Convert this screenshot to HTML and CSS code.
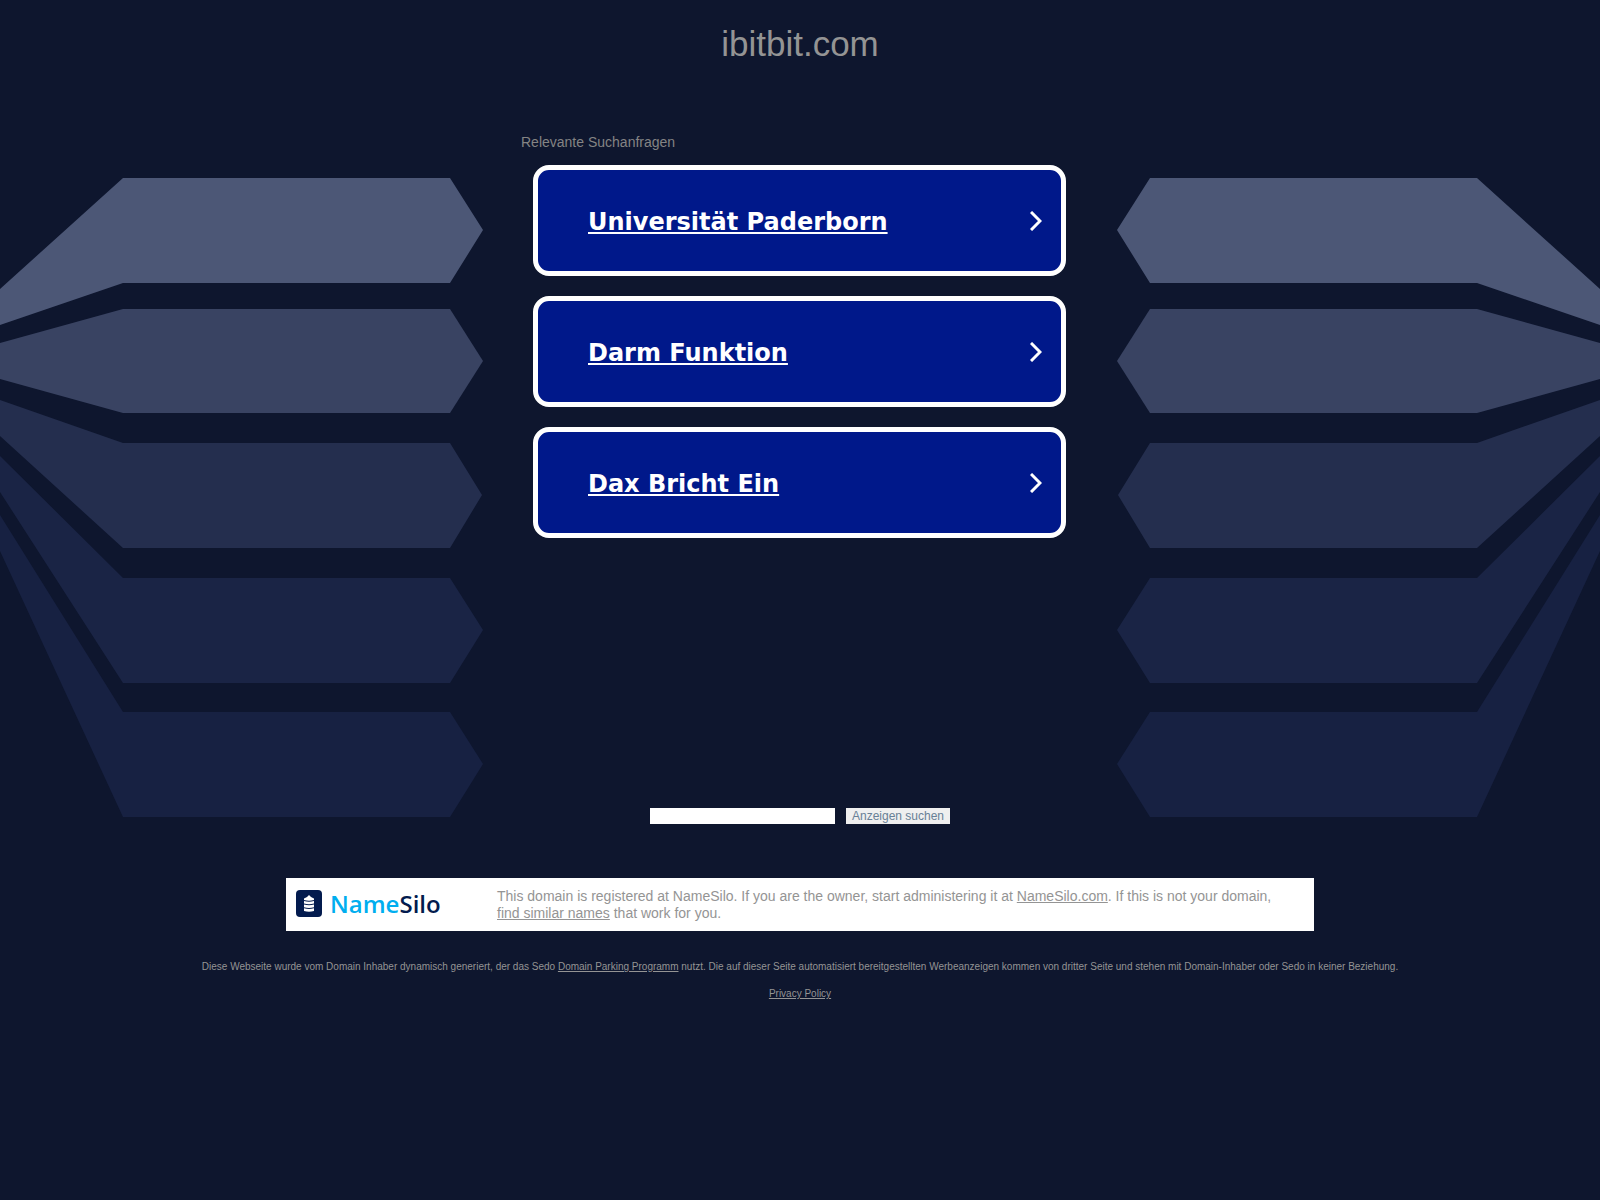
FILE: index.html
```html
<!DOCTYPE html>
<html lang="de">
<head>
    <meta charset="UTF-8">
    <meta name="viewport" content="width=device-width, initial-scale=1.0">
    <title>ibitbit.com</title>
    <link rel="stylesheet" href="styles.css">
</head>
<body>
    <header class="header">
        <h1>ibitbit.com</h1>
    </header>
    <main class="main">
        <svg class="arrows" viewBox="0 0 483 639" aria-hidden="true">
            <polygon fill="#4c5776" points="0,111 123,0 450,0 483,52 450,105 123,105 0,147"/>
            <polygon fill="#394362" points="0,165 123,131 450,131 483,183 450,235 123,235 0,201"/>
            <polygon fill="#242e4e" points="0,222 123,265 450,265 482,317 450,370 123,370 0,258"/>
            <polygon fill="#1a2445" points="0,278 123,400 450,400 483,452 450,505 123,505 0,314"/>
            <polygon fill="#172142" points="0,337 123,534 450,534 483,586 450,639 123,639 0,373"/>
        </svg>
        <div class="content">
            <section class="ads">
                <h2>Relevante Suchanfragen</h2>
                <ul class="ads-list">
                    <li>
                        <a href="#">
                            <span>Universität Paderborn</span>
                            <svg class="chevron" viewBox="0 0 12 20"><path d="M1 1l9 9-9 9"/></svg>
                        </a>
                    </li>
                    <li>
                        <a href="#">
                            <span>Darm Funktion</span>
                            <svg class="chevron" viewBox="0 0 12 20"><path d="M1 1l9 9-9 9"/></svg>
                        </a>
                    </li>
                    <li>
                        <a href="#">
                            <span>Dax Bricht Ein</span>
                            <svg class="chevron" viewBox="0 0 12 20"><path d="M1 1l9 9-9 9"/></svg>
                        </a>
                    </li>
                </ul>
            </section>
            <form class="search">
                <input type="text" name="q" aria-label="Anzeigen suchen">
                <button type="submit">Anzeigen suchen</button>
            </form>
        </div>
        <svg class="arrows arrows-right" viewBox="0 0 483 639" aria-hidden="true">
            <polygon fill="#4c5776" points="0,111 123,0 450,0 483,52 450,105 123,105 0,147"/>
            <polygon fill="#394362" points="0,165 123,131 450,131 483,183 450,235 123,235 0,201"/>
            <polygon fill="#242e4e" points="0,222 123,265 450,265 482,317 450,370 123,370 0,258"/>
            <polygon fill="#1a2445" points="0,278 123,400 450,400 483,452 450,505 123,505 0,314"/>
            <polygon fill="#172142" points="0,337 123,534 450,534 483,586 450,639 123,639 0,373"/>
        </svg>
    </main>
    <div class="banner">
        <a class="logo" href="#">
            <svg viewBox="0 0 26 27" aria-hidden="true">
                <rect width="26" height="27" rx="4" fill="#031b4e"/>
                <path fill="#fff" d="M8 10V8.500l3-1.500 2-2 2 2 3 1.500V10q-5 1.500-10 0zM8 11q5 1.500 10 0v2.600q-5 1.500-10 0zM8 14.600q5 1.500 10 0v2.600q-5 1.500-10 0zM8 18.200q5 1.500 10 0V21q-5 1.500-10 0z"/>
            </svg>
            <span class="logo-text"><span>Name</span>Silo</span>
        </a>
        <p>This domain is registered at NameSilo. If you are the owner, start administering it at <a href="#">NameSilo.com</a>. If this is not your domain, <a href="#">find similar names</a> that work for you.</p>
    </div>
    <footer class="footer">
        <p>Diese Webseite wurde vom Domain Inhaber dynamisch generiert, der das Sedo <a href="#">Domain Parking Programm</a> nutzt. Die auf dieser Seite automatisiert bereitgestellten Werbeanzeigen kommen von dritter Seite und stehen mit Domain-Inhaber oder Sedo in keiner Beziehung.</p>
        <p><a href="#">Privacy Policy</a></p>
    </footer>
</body>
</html>
```
FILE: styles.css
```css
* {
    box-sizing: border-box;
    margin: 0;
    padding: 0;
}

body {
    background: #0e162e;
    color: #949494;
    font-family: Arial, "Liberation Sans", sans-serif;
    font-size: 14px;
}

.header {
    padding: 24px 20px;
    text-align: center;
}
.header h1 {
    font-size: 35px;
    font-weight: normal;
    line-height: 40px;
}

.main {
    display: flex;
    align-items: stretch;
    padding-top: 46px;
}
.arrows {
    flex: none;
    width: 483px;
    height: 639px;
    margin-top: 44px;
}
.arrows-right {
    transform: scaleX(-1);
}
.content {
    flex: 1;
    display: flex;
    flex-direction: column;
    justify-content: space-between;
    min-height: 690px;
    padding: 0 38px;
}

.ads h2 {
    color: #848484;
    font-size: 14px;
    font-weight: normal;
    line-height: 16px;
}
.ads-list {
    display: flex;
    flex-direction: column;
    gap: 20px;
    padding: 15px 13px 15px 12px;
    list-style: none;
}
.ads-list a {
    display: flex;
    align-items: center;
    justify-content: space-between;
    height: 111px;
    padding: 0 19px 0 50px;
    border: 5px solid #fff;
    border-radius: 16px;
    background: #00188a;
    color: #fff;
    font-family: Verdana, "DejaVu Sans", sans-serif;
    font-size: 24px;
    font-weight: bold;
    line-height: 28px;
}
.ads-list span {
    padding-top: 2px;
}
.chevron {
    width: 12px;
    height: 20px;
    fill: none;
    stroke: #fff;
    stroke-width: 3;
}

.search {
    display: flex;
    justify-content: center;
    gap: 11px;
}
.search input,
.search button {
    height: 16px;
    border: none;
    font-family: inherit;
    font-size: 12px;
    line-height: 16px;
}
.search input {
    width: 185px;
    background: #fff;
}
.search button {
    padding: 0 6px;
    background: #efefef;
    color: #688096;
}

.banner {
    display: flex;
    align-items: flex-start;
    max-width: 1028px;
    margin: 54px auto 0;
    padding: 10px 20px 9px 10px;
    background: #fff;
}
.banner p {
    flex: 1;
    line-height: 17px;
}
.banner p a,
.footer a {
    color: inherit;
}

.logo {
    display: flex;
    align-items: center;
    gap: 8px;
    width: 201px;
    padding-top: 2px;
    color: #031b4e;
    text-decoration: none;
}
.logo svg {
    width: 26px;
    height: 27px;
}
.logo-text {
    font-family: "Open Sans", sans-serif;
    font-size: 24px;
    font-weight: 600;
    line-height: 26px;
}
.logo-text span {
    color: #00aeef;
}

.footer {
    display: flex;
    flex-direction: column;
    gap: 15px;
    padding: 30px 20px;
    font-size: 10px;
    line-height: 12px;
    text-align: center;
}
```
